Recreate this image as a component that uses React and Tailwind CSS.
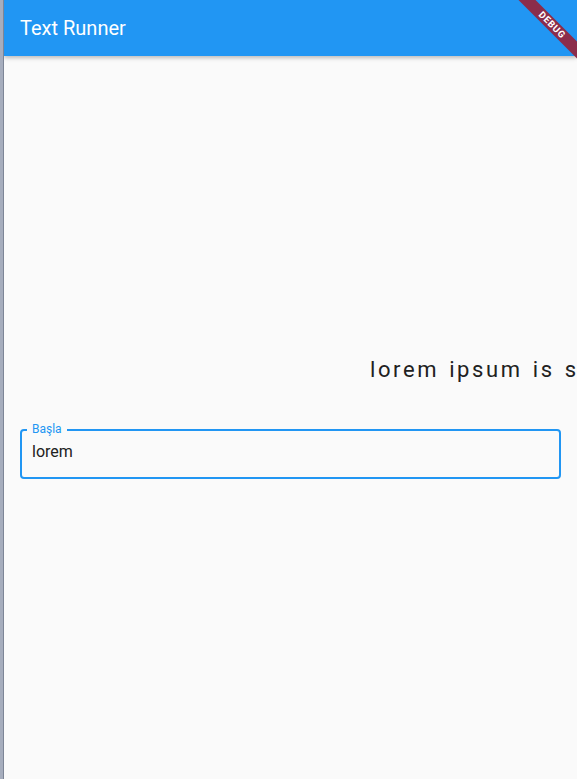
export default function App() {
  return (
    <div className="flex w-[577px] h-[779px] overflow-hidden" style={{ fontFamily: "Roboto, 'Noto Sans', sans-serif" }}>
      <div className="w-[4px] h-full bg-[#a6adbd] border-r border-[#7d8596]" />
      <div className="relative flex-1 flex flex-col bg-[#fafafa] overflow-hidden">
        <div className="h-[56px] shrink-0 bg-[#2196f3] flex items-center px-4 shadow-[0_2px_4px_rgba(0,0,0,0.25)] z-10">
          <span className="text-white text-[20px] font-normal">Text Runner</span>
        </div>
        <div className="absolute top-0 right-0 w-[70px] h-[70px] overflow-hidden pointer-events-none z-20">
          <div className="absolute top-[19px] right-[-25px] w-[100px] h-[12px] bg-[#8b2d4b] rotate-45 flex items-center justify-center">
            <span className="text-white text-[9.5px] font-bold tracking-[0.6px] leading-none">DEBUG</span>
          </div>
        </div>
        <div className="flex-1 flex flex-col">
          <div className="h-[296px] shrink-0" />
          <div className="pl-[366px] whitespace-nowrap overflow-hidden h-[36px] shrink-0">
            <span className="text-[22px] tracking-[2.6px] [word-spacing:2px] text-[#212121] leading-[36px]">lorem ipsum is simple dummy text</span>
          </div>
          <div className="h-[41px] shrink-0" />
          <div className="px-4">
            <div className="relative border-2 border-[#2196f3] rounded-[4px] h-[50px] pl-[10px] pt-[11px]">
              <span className="absolute left-[5px] top-[-9px] px-[5px] bg-[#fafafa] text-[12px] text-[#2196f3] leading-[14px]">Başla</span>
              <div className="text-[16px] text-[#212121] leading-[20px]">lorem</div>
            </div>
          </div>
        </div>
      </div>
    </div>
  );
}
